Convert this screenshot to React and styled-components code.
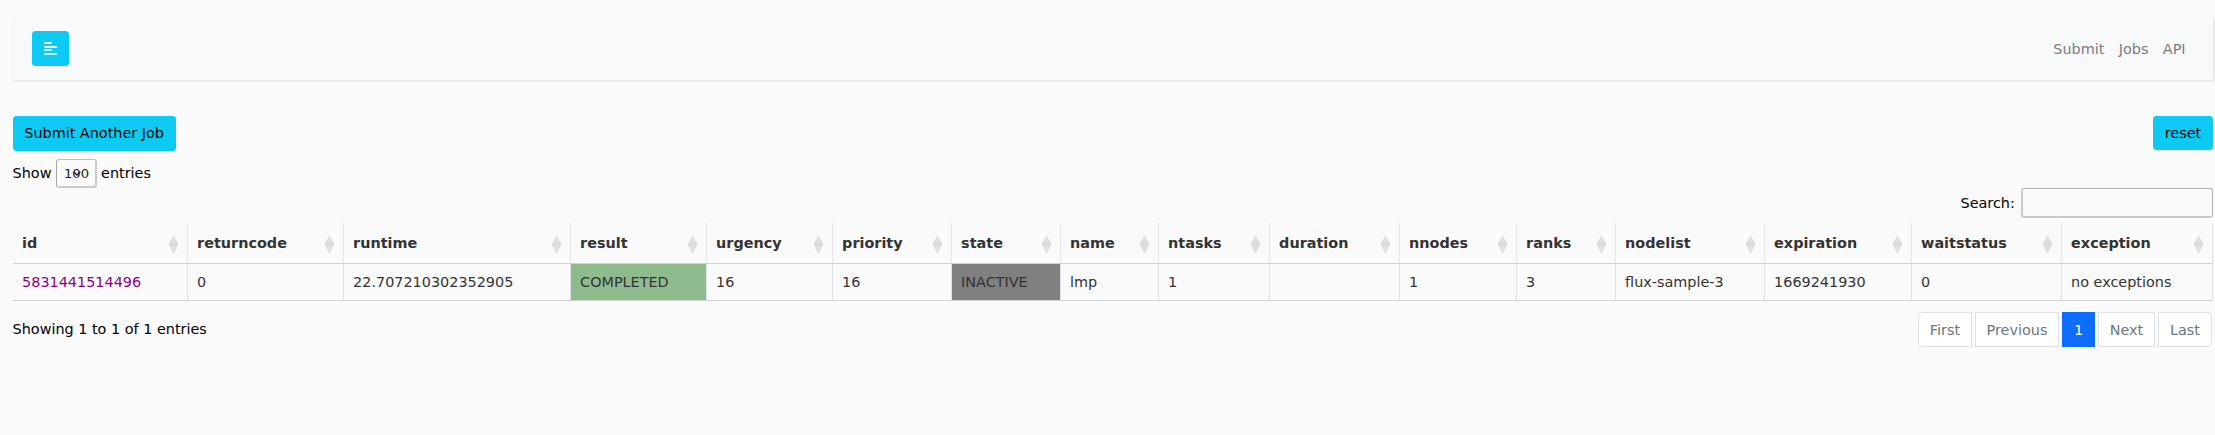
import React from "react";
import styled, { createGlobalStyle } from "styled-components";

const Global = createGlobalStyle`
  *, *::before, *::after { box-sizing: border-box; }
  body {
    margin: 0;
    background: #fafafa;
    color: #000;
    font-family: "DejaVu Sans", sans-serif;
    font-size: 14.4px;
    line-height: 22px;
  }
`;

const Page = styled.main`
  height: 435px;
  padding: 17px 2px 0 12.6px;
  overflow: hidden;
`;

const Navbar = styled.nav`
  display: flex;
  align-items: center;
  justify-content: space-between;
  height: 63px;
  padding: 0 27.4px 0 19.4px;
  background: #f8f9fb;
  box-shadow: 1px 1px 3px rgba(0, 0, 0, 0.13);
`;

const NavLinks = styled.div`
  display: flex;
  gap: 14.4px;
  padding-top: 1px;
`;

const NavLink = styled.a`
  color: #7b7c7d;
`;

const Button = styled.button`
  display: flex;
  align-items: center;
  justify-content: center;
  width: ${(p) => p.$width}px;
  height: ${(p) => p.$height || 35}px;
  padding: 0 0 1px;
  border: 0;
  border-radius: 3.5px;
  background: #0dcaf2;
  color: #000;
  font: inherit;
  white-space: nowrap;
`;

const Actions = styled.div`
  display: flex;
  align-items: flex-start;
  justify-content: space-between;
  margin-top: 36px;
`;

const LengthRow = styled.label`
  display: flex;
  align-items: center;
  height: 29px;
  margin-top: 8px;
  padding-bottom: 1px;
  gap: 4.3px;
`;

const Select = styled.span`
  display: grid;
  place-items: center;
  width: 41px;
  height: 29px;
  padding-left: 1.5px;
  border: 1px solid;
  border-color: #c0c0c0 #cacaca #cacaca #a9a9a9;
  border-width: 1px 2px 2px 1px;
  border-radius: 3px;
  color: #222;
  font-size: 13.1px;
  position: relative;
  top: 0.5px;

  & > * { grid-area: 1 / 1; }
  & > span { padding-top: 1px; }
  & > svg { margin-left: 1px; }
`;

const SearchRow = styled.label`
  display: flex;
  align-items: center;
  justify-content: flex-end;
  height: 30px;
  gap: 6.2px;
`;

const SearchInput = styled.input`
  width: 192px;
  height: 30px;
  border: 1px solid;
  border-color: #b4b4b4 #b4b4b4 #cacaca #cacaca;
  border-width: 1px 1px 2px 2px;
  border-radius: 3px;
  background: transparent;
`;

const Table = styled.table`
  width: 2200px;
  margin-top: 5px;
  table-layout: fixed;
  border-collapse: separate;
  border-spacing: 0;
  color: #333;
`;

const HeadCell = styled.th`
  width: ${(p) => p.$width}px;
  height: 41px;
  padding: 0 9px 0 9.5px;
  border-right: 1px solid #e3e5e7;
  border-bottom: 1px solid #cfd1d3;
  text-align: left;
`;

const HeadContent = styled.div`
  display: flex;
  align-items: center;
  justify-content: space-between;

  & > svg { margin-top: 2px; }
`;

const Cell = styled.td`
  height: 37px;
  padding: 0 9px 0 9.5px;
  border-right: 1px solid #e0e2e5;
  border-bottom: 1px solid #cfd1d3;
  background: ${(p) => p.$fill || "transparent"};
`;

const JobLink = styled.a`
  color: #8b008b;
`;

const Footer = styled.div`
  display: flex;
  justify-content: space-between;
  padding: 11px 1px 0 0;
`;

const Info = styled.div`
  padding-top: 6px;
`;

const Pages = styled.div`
  display: flex;
  gap: 3px;
`;

const PageButton = styled.button`
  width: ${(p) => p.$width}px;
  height: 35px;
  padding: 0;
  border: 1px solid ${(p) => (p.$active ? "#0d6efd" : "#dee2e6")};
  border-radius: ${(p) => p.$radius || 0};
  background: ${(p) => (p.$active ? "#0d6efd" : "#fff")};
  color: ${(p) => (p.$active ? "#fff" : "#6c757d")};
  font: inherit;
`;

const SortIcon = () => (
  <svg width="9" height="17" viewBox="0 0 9 17">
    <path fill="#dfdfdf" d="M4 0h1L9 7.4v2L5 17H4L0 9.4v-2z" />
    <path fill="#d5d5d5" d="M0 7.5h9v1.6H0z" />
  </svg>
);

const columns = [
  { name: "id", width: 175, value: "5831441514496", link: true },
  { name: "returncode", width: 156, value: "0" },
  { name: "runtime", width: 227, value: "22.707210302352905" },
  { name: "result", width: 136, value: "COMPLETED", fill: "#8fbc8f" },
  { name: "urgency", width: 126, value: "16" },
  { name: "priority", width: 119, value: "16" },
  { name: "state", width: 109, value: "INACTIVE", fill: "#808080" },
  { name: "name", width: 98, value: "lmp" },
  { name: "ntasks", width: 111, value: "1" },
  { name: "duration", width: 130, value: "" },
  { name: "nnodes", width: 117, value: "1" },
  { name: "ranks", width: 99, value: "3" },
  { name: "nodelist", width: 149, value: "flux-sample-3" },
  { name: "expiration", width: 147, value: "1669241930" },
  { name: "waitstatus", width: 150, value: "0" },
  { name: "exception", width: 151, value: "no exceptions" },
];

export default function App() {
  return (
    <>
      <Global />
      <Page>
        <Navbar>
          <Button $width={37} aria-label="Toggle menu">
            <svg width="13" height="13" viewBox="0 0 13 13" fill="#fff">
              <path d="M0 0h8v1.8H0zM0 4h13v1.8H0zM0 7h8v1.8H0zM0 11h13v1.8H0z" />
            </svg>
          </Button>
          <NavLinks>
            <NavLink>Submit</NavLink>
            <NavLink>Jobs</NavLink>
            <NavLink>API</NavLink>
          </NavLinks>
        </Navbar>
        <Actions>
          <Button $width={163}>Submit Another Job</Button>
          <Button $width={60} $height={34}>reset</Button>
        </Actions>
        <LengthRow>
          Show
          <Select>
            <span>100</span>
            <svg width="8" height="5" viewBox="0 0 8 5" fill="none" stroke="#222" strokeWidth="1.4">
              <path d="M.7.7 4 4 7.3.7" />
            </svg>
          </Select>
          entries
        </LengthRow>
        <SearchRow>
          Search:
          <SearchInput />
        </SearchRow>
        <Table>
          <thead>
            <tr>
              {columns.map((c) => (
                <HeadCell key={c.name} $width={c.width}>
                  <HeadContent>
                    {c.name}
                    <SortIcon />
                  </HeadContent>
                </HeadCell>
              ))}
            </tr>
          </thead>
          <tbody>
            <tr>
              {columns.map((c) => (
                <Cell key={c.name} $fill={c.fill}>
                  {c.link ? <JobLink>{c.value}</JobLink> : c.value}
                </Cell>
              ))}
            </tr>
          </tbody>
        </Table>
        <Footer>
          <Info>Showing 1 to 1 of 1 entries</Info>
          <Pages>
            <PageButton $width={54} $radius="4px 0 0 4px">First</PageButton>
            <PageButton $width={84}>Previous</PageButton>
            <PageButton $width={33} $active>1</PageButton>
            <PageButton $width={57}>Next</PageButton>
            <PageButton $width={54} $radius="0 4px 4px 0">Last</PageButton>
          </Pages>
        </Footer>
      </Page>
    </>
  );
}
